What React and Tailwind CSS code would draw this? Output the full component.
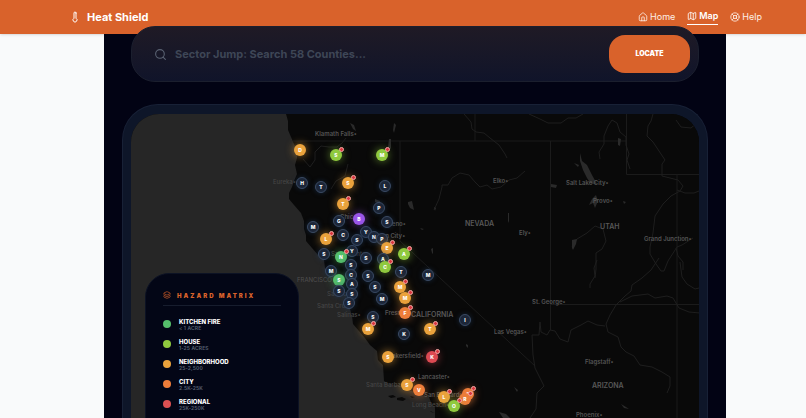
import { House, Map as MapIcon, LifeBuoy, Search, Layers, Thermometer } from "lucide-react";

const TONES = {
  idle: "bg-[#1c2638] border border-[#3a4a63] text-white shadow-[0_0_5px_#1e3a5f90]",
  green: "bg-[#55bf6b] text-white shadow-[0_0_8px_#55bf6ba0]",
  lime: "bg-[#8fc93e] text-white shadow-[0_0_8px_#8fc93ea0]",
  amber: "bg-[#eaa23c] text-white shadow-[0_0_8px_#eaa23cb0]",
  orange: "bg-[#ed7d3a] text-white shadow-[0_0_8px_#ed7d3aa0]",
  red: "bg-[#dc4a52] text-white shadow-[0_0_8px_#dc4a52a0]",
  purple: "bg-[#9a55e8] text-white shadow-[0_0_8px_#9a55e8a0]",
};

// [letter, x, y, tone, has an active alert]
const PINS = [
  ["D", 300, 150, "amber"], ["S", 336, 155, "lime", 1], ["M", 382, 155, "lime", 1],
  ["H", 302, 183, "idle"], ["T", 321, 187, "idle"], ["S", 348, 183, "amber", 1],
  ["L", 385, 186, "idle"], ["T", 343, 204, "amber", 1], ["P", 379, 208, "idle"],
  ["G", 339, 221, "idle"], ["B", 359, 219, "purple"], ["S", 387, 222, "idle"],
  ["M", 313, 227, "idle"], ["C", 343, 235, "idle"], ["Y", 366, 232, "idle"],
  ["L", 326, 239, "amber", 1], ["S", 357, 240, "idle"], ["N", 374, 237, "idle"],
  ["P", 382, 239, "idle"], ["E", 387, 248, "amber", 1], ["S", 324, 254, "idle"],
  ["Y", 352, 251, "idle"], ["N", 341, 257, "green", 1], ["A", 404, 254, "lime", 1],
  ["S", 366, 258, "idle"], ["A", 383, 259, "idle"], ["C", 385, 267, "lime", 1],
  ["S", 351, 265, "idle"], ["M", 331, 271, "idle"], ["C", 351, 275, "idle"],
  ["S", 339, 280, "green"], ["S", 368, 276, "idle"], ["T", 401, 272, "idle"],
  ["M", 428, 275, "idle"], ["A", 352, 284, "idle"], ["S", 339, 291, "idle"],
  ["S", 352, 294, "idle"], ["S", 349, 303, "idle"], ["S", 375, 287, "idle"],
  ["M", 382, 299, "idle"], ["M", 400, 287, "amber", 1], ["M", 405, 298, "amber", 1],
  ["F", 405, 313, "orange", 1], ["S", 373, 317, "idle"], ["M", 368, 329, "amber", 1],
  ["K", 404, 334, "idle"], ["T", 430, 329, "amber", 1], ["I", 465, 320, "idle"],
  ["S", 388, 357, "amber"], ["K", 432, 357, "red", 1], ["S", 407, 385, "amber", 1],
  ["V", 419, 390, "orange"], ["L", 444, 397, "amber", 1], ["S", 468, 394, "orange", 1],
  ["R", 465, 399, "orange", 1], ["O", 454, 406, "lime", 1],
];

const CITIES = [
  ["Klamath Falls•", 315, 136], ["Elko•", 493, 183], ["Ely•", 519, 235],
  ["Salt Lake City•", 566, 185], ["Provo•", 593, 203], ["Grand Junction•", 644, 241],
  ["St. George•", 532, 304], ["Las Vegas•", 494, 334], ["Flagstaff•", 585, 364],
  ["Phoenix•", 576, 417], ["Lancaster•", 418, 379], ["Bakersfield•", 388, 358],
  ["Fresno•", 385, 315], ["Reno•", 388, 226], ["Carson City•", 368, 238],
  ["Chico•", 340, 219], ["San Bernardino•", 424, 397],
];

const COAST_CITIES = [
  ["Eureka•", 273, 184], ["Santa Cruz•", 317, 308], ["Salinas•", 337, 317],
  ["Santa Barbara•", 366, 387], ["Long Beach•", 412, 407], ["San Jose•", 327, 296],
  ["Sacramento•", 331, 256],
];

const STATES = [
  ["NEVADA", 465, 226], ["UTAH", 600, 229], ["CALIFORNIA", 411, 317], ["ARIZONA", 592, 388],
];

const LEVELS = [
  ["KITCHEN FIRE", "< 1 ACRE", "bg-[#55bf6b]"],
  ["HOUSE", "1-25 ACRES", "bg-[#8fc93e]"],
  ["NEIGHBORHOOD", "25-2,500", "bg-[#eaa23c]"],
  ["CITY", "2.5K-25K", "bg-[#ed7d3a]"],
  ["REGIONAL", "25K-250K", "bg-[#dc5052]"],
];

function Terrain() {
  return (
    <svg
      viewBox="131 114 568 304"
      className="absolute left-0 top-0 h-[304px] w-[568px] font-['Inter',sans-serif]"
      aria-hidden="true"
    >
      <path
        fill="#090909"
        d="M286 114 288 121 288 130 291 137 294 144 297 150 297 158 295 165 297 174 294 181 292 187 289 193 289 199 294 205 301 213 304 221 304 229 306 235 306 241 312 248 319 256 324 260 325 268 331 274 336 278 337 284 341 289 346 295 347 303 350 309 352 316 353 324 359 331 365 338 370 345 377 351 378 360 383 365 384 381 389 384 398 385 409 390 422 395 429 397 432 405 438 410 449 410 455 418 720 418 720 114Z"
      />
      <g fill="#090909">
        <path d="M388 396l5-1 3 2-5 1zM397 398l5-1 4 2-3 2-6-1zM410 396l5 1-3 1zM430 411l5 2-4-1z" />
      </g>
      <g fill="none" stroke="#1b1b1b" strokeWidth="1">
        <path d="M293 141H626M475 114V141M400 141V241L535 366M550.500 141V330M626.500 114V174.500H699M677 174V418M550 304.500H699" />
      </g>
      <g fill="none" stroke="#1e1e1e" strokeWidth="1" strokeLinejoin="round">
        <path d="M464 114l7 8 1 7 4 3 8 1 6 5 9 7 6 9 2 4M529 114l11 5 8 4 13 0 7-5 8 0 7-4" />
        <path d="M434 210l5-11 3-12 0-2 6 0 4-7 8-5 9 2 6 7 5 5 7-2 5 4 9-2 8-7 8-2 8-7" />
        <path d="M600 159l-1-7 5-8 0-8 4-10 4-6 5 3 3 9 6 5 0 8 3 9-2 6 3 9M653 114l-2 7-3 5-1 10 6 6 4 6 8 12-3 4 0 12 16 4 5 6-3 5-9 5-8 8-8 12-2 17-3 14 0 7 6 10 5 7 3 0 4-10 9-14 5-2 11-7M676 248l2 8 5 6 0 8M677 190l8 3 9 0 5-2M676 120l5 7 10 1 6-5" />
        <path d="M572 247l5-8 10-6 8-7 8 3 3 12-4 8-6 4 0 16-1 9M597 260l-3 8 1 8-5 8 0 4" />
        <path d="M659 258l-8 12-9 8-10 7-1 6-6 5-9 9-6 10-4 9 2 8 10 5 3 10 5 5 8 4 6 9 12 2 10 5 8 5 0 9-3 7M620 302l12-6 16-2 7 4 12-2 6 2 6 10 10 4 11 1M680 262l2 15 5 7 8 5 4-1" />
        <path d="M605 326l-8-1-9-4-7 4-10 5-3 12-8-3-5-8-5-1-3 5-6-3-1-10-1 13-7 0 1 20 2 13 4 8 5 10-7 7-1 16-6 9" />
        <path d="M303 159l7 8 5-7 0-8 6-6 8 1 8 0 5-4 4-5M348 164l-3 12-9 5-5 8" />
      </g>
      <g fill="#2a2a2a">
        <path d="M580 153l2 8 5 4 5 10 5 9-6 0-4-6-4-8-3-9zM574 163l5 2-1 2zM618 138l3 1-1 7-2-1zM551 184l6 1-1 3-5-1zM592 199l4-4 2 6-3 7-2-5-4 2zM623 201l3 1-2 2zM572 240l5-1-1 5-3 6-1-2z" />
        <path d="M408 202l4-1 2 9-4-2-2-4zM508 213l1 0 0 10-1-2zM389 139l2 0 0 10-3-2zM350 123l4 2 2 6-3-2zM431 249l2-1 0 6-1-1zM375 199l5 2 0 3-5-2zM394 123l2 2-2 8-1-3zM434 207l2 1-1 3zM420 228l4 1-2 1zM514 387l4 3-1 2zM621 404l5 3 3 2-5-1zM499 412l7 2 4 4-7 0zM466 344l2 1 0 3-2-2z" />
      </g>
      <g fill="#545454" fontSize="6" fontWeight="600">
        {CITIES.map(([name, x, y]) => <text key={name} x={x} y={y}>{name}</text>)}
      </g>
      <g fill="#454545" fontSize="6" fontWeight="500">
        {COAST_CITIES.map(([name, x, y]) => <text key={name} x={x} y={y}>{name}</text>)}
      </g>
      <text x="297" y="282" fill="#505050" fontSize="6">FRANCISCO</text>
      <g fill="#585858" fontSize="7" fontWeight="600">
        {STATES.map(([name, x, y]) => <text key={name} x={x} y={y}>{name}</text>)}
      </g>
    </svg>
  );
}

function Pin({ letter, x, y, tone, alert }) {
  return (
    <button
      type="button"
      className={`absolute flex size-3 -translate-x-1/2 -translate-y-1/2 items-center justify-center rounded-full text-[5px] font-extrabold leading-none ${TONES[tone]}`}
      style={{ left: x - 131, top: y - 114 }}
    >
      {letter}
      {alert ? (
        <span className="absolute -right-0.5 -top-0.5 size-[5px] rounded-full border border-[#f3a9a6] bg-[#d9363e]" />
      ) : null}
    </button>
  );
}

function Legend() {
  return (
    <aside className="absolute left-3.5 top-[159px] h-52 w-[154px] rounded-3xl border border-[#0c1224] bg-[#030616] px-[17px] pt-[15px]">
      <h2 className="flex h-3 items-center gap-1.5 text-[6px] font-black tracking-[2px] text-[#d9622b]">
        <Layers size={8} strokeWidth={2} />
        HAZARD MATRIX
      </h2>
      <ul className="mt-1 border-t border-[#171d2e] pt-[11px]">
        {LEVELS.map(([name, range, dot]) => (
          <li key={name} className="mb-1.5 flex h-3.5 items-center gap-2">
            <span className={`size-2 rounded-full ${dot}`} />
            <div>
              <p className="text-[6px] font-extrabold leading-[7px] text-white">{name}</p>
              <p className="text-[5px] font-semibold leading-[6px] tracking-wide text-[#596273]">{range}</p>
            </div>
          </li>
        ))}
      </ul>
    </aside>
  );
}

export default function App() {
  return (
    <div className="flex h-screen flex-col overflow-hidden bg-[#f9fafb] font-['Inter',sans-serif]">
      <header className="flex h-[34px] shrink-0 items-center justify-between bg-[#d9622b] pl-[69px] pr-11 text-white shadow-sm">
        <a href="#top" className="flex items-center gap-1.5 text-[11px] font-bold">
          <Thermometer size={12} strokeWidth={2} />
          Heat Shield
        </a>
        <nav className="flex items-center gap-3 text-[9px]">
          <a href="#home" className="flex items-center gap-0.5 text-[#fdeee6]">
            <House size={10} strokeWidth={2} />
            Home
          </a>
          <a href="#map" className="flex items-center gap-0.5 border-b border-white pb-0.5 font-semibold">
            <MapIcon size={10} strokeWidth={2} />
            Map
          </a>
          <a href="#help" className="flex items-center gap-0.5 text-[#fdeee6]">
            <LifeBuoy size={10} strokeWidth={2} />
            Help
          </a>
        </nav>
      </header>

      <main className="ml-[104px] mr-20 flex min-h-0 flex-1 flex-col bg-[#020314] px-[18px]">
        <form className="relative z-10 mx-[9px] -mt-2 flex h-14 shrink-0 items-center rounded-3xl border border-[#1b1f2e] bg-linear-to-b from-[#1f1a25] to-[#10142a] pl-[22px] pr-2">
          <label htmlFor="county" aria-label="County" className="text-[#5a6272]">
            <Search size={13} strokeWidth={2} />
          </label>
          <input
            id="county"
            type="text"
            placeholder="Sector Jump: Search 58 Counties..."
            className="ml-2 h-5 min-w-0 flex-1 bg-transparent text-[11px] font-bold text-white outline-none placeholder:text-[#3e4656]"
          />
          <button type="button" className="h-[38px] w-[81px] rounded-2xl bg-[#d9622b] text-[7px] font-black text-white">
            LOCATE
          </button>
        </form>

        <section className="mt-[22px] min-h-0 flex-1 overflow-hidden rounded-t-[36px] border border-b-0 border-[#182136] bg-[#0e1629] px-2 pt-[9px]">
          <div className="relative h-full overflow-hidden rounded-t-[28px] bg-[#090909]">
            <div className="absolute inset-y-0 left-0 w-[304px] bg-[#262626]" />
            <Terrain />
            {PINS.map(([letter, x, y, tone, alert]) => (
              <Pin key={`${x}-${y}`} letter={letter} x={x} y={y} tone={tone} alert={alert} />
            ))}
            <Legend />
          </div>
        </section>
      </main>
    </div>
  );
}
